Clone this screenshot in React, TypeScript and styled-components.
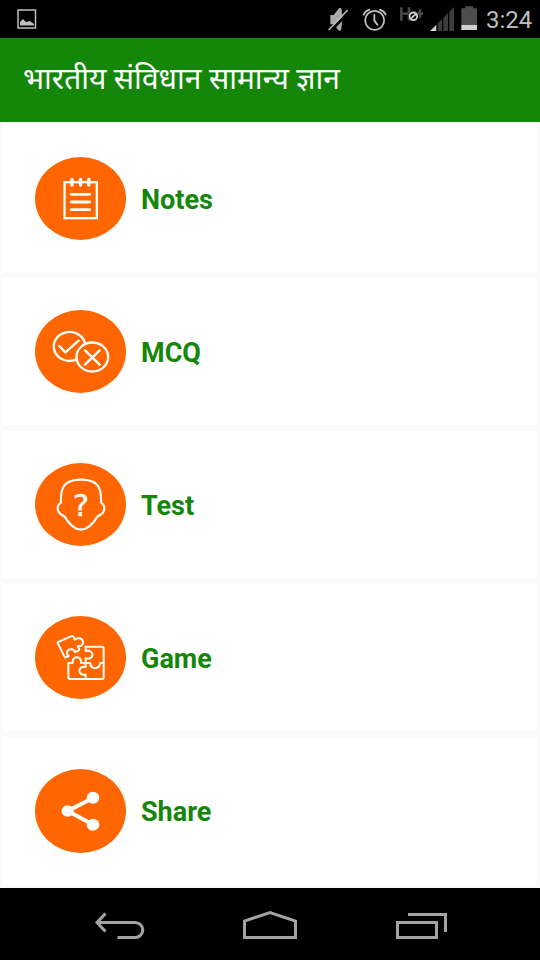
import React from 'react';
import styled, { createGlobalStyle } from 'styled-components';

const GlobalStyle = createGlobalStyle`
  * { box-sizing: border-box; }
  html, body { margin: 0; padding: 0; background: #000; }
  body { font-family: Roboto, "Noto Sans", sans-serif; overflow: hidden; }
  svg { display: block; flex: none; }
`;

const Screen = styled.div`
  width: 540px;
  height: 960px;
  display: flex;
  flex-direction: column;
  overflow: hidden;
  background: #fafafa;
`;

const StatusBar = styled.div`
  height: 38px;
  flex: none;
  display: flex;
  align-items: center;
  justify-content: space-between;
  padding: 0 8px 0 16px;
  background: #000;
`;

const StatusIcons = styled.div`
  display: flex;
  align-items: center;
`;

const Clock = styled.span`
  width: 48px;
  font-size: 24px;
  line-height: 38px;
  white-space: nowrap;
  color: #bebebe;
  padding: 2px 0 0 2px;
`;

const Header = styled.header`
  height: 84px;
  flex: none;
  display: flex;
  align-items: center;
  padding: 0 24px 2px;
  background: #14870a;
`;

const Title = styled.h1`
  margin: 0 0 0 -1px;
  font-family: Roboto, "Noto Sans Devanagari", "Noto Sans", sans-serif;
  font-size: 30px;
  font-weight: 400;
  line-height: 40px;
  white-space: nowrap;
  color: #fff;
`;

const Menu = styled.main`
  height: 766px;
  flex: none;
  display: flex;
  flex-direction: column;
  gap: 6px;
  padding: 0 3px;
`;

const Card = styled.div<{ $first?: boolean; $last?: boolean }>`
  height: ${p => (p.$first ? 150 : p.$last ? 148 : 147)}px;
  padding: ${p => (p.$first ? 35 : 32)}px 32px 0;
  display: flex;
  align-items: flex-start;
  gap: 15px;
  background: #fff;
`;

const Badge = styled.div<{ $tall?: boolean }>`
  width: 91px;
  height: ${p => (p.$tall ? 84 : 83)}px;
  flex: none;
  border-radius: 50%;
  background: #ff6600;
`;

const Label = styled.span`
  font-size: 27px;
  font-weight: 700;
  line-height: 87px;
  color: #14870a;
`;

const NavBar = styled.nav`
  height: 72px;
  flex: none;
  display: flex;
  justify-content: space-between;
  padding: 0 92px;
  background: #000;
`;

const Icon = ({ top = 30, children }: { top?: number; children: React.ReactNode }) => (
  <svg width="91" height="83" viewBox={`30 ${top} 273 249`} fill="none" stroke="#fff"
    strokeWidth="7" strokeLinecap="round" strokeLinejoin="round">
    {children}
  </svg>
);

const NotesIcon = () => (
  <Icon top={36}>
    <rect x="118.500" y="111.500" width="97" height="108" strokeLinejoin="miter" />
    <path d="M141 103V120M166.500 103V120M191.500 103V120" strokeWidth="10" />
    <path d="M139 148H194M139 171H194M139 194H194" strokeWidth="8.500" />
  </Icon>
);

const McqIcon = () => (
  <Icon>
    <path d="M155 178A47.500 43.500 0 1 1 179 126" />
    <ellipse cx="202" cy="171" rx="47.500" ry="43.500" />
    <path d="M103 138L121 157L161 122M180 151L224 194M224 151L180 194" />
  </Icon>
);

const TestIcon = () => (
  <Icon>
    <path strokeWidth="6.500" d="M168 80C139 80 119 89 112 109C107 121 109 137 107 150C98 153 96 166 100 175C103 184 114 187 119 191C132 213 148 230 168 230C188 230 204 213 217 191C222 187 233 184 236 175C240 166 238 153 229 150C227 137 229 121 224 109C217 89 197 80 168 80Z" />
    <text x="168" y="189" textAnchor="middle" fill="#fff" stroke="#fff" strokeWidth="1" fontFamily="DejaVu Sans, sans-serif" fontSize="93">?</text>
  </Icon>
);

const GameIcon = () => (
  <Icon>
    <g strokeWidth="6">
      <path d="M97 109L138 91Q143 88 146 93L149 101C157 93 173 96 174 108C175 118 167 121 158 120L162 128Q164 132 159 135L150 138C147 126 126 127 126 142Q126 147 131 150L120 155Z" />
      <path d="M182 122H231Q236 122 236 127V214Q236 219 231 219H135Q130 219 130 214V171H143C139 148 172 148 168 171H195C198 192 223 191 226 171H236" />
      <path d="M182 122V135C210 130 209 163 182 157V183C157 177 157 211 182 206V219" />
    </g>
  </Icon>
);

const ShareIcon = () => (
  <Icon>
    <path d="M205 116L128 156L205 197" strokeWidth="12" />
    <g fill="#fff" stroke="none">
      <ellipse cx="128" cy="156" rx="18.500" ry="17.500" />
      <ellipse cx="204" cy="116" rx="19" ry="18" />
      <ellipse cx="204" cy="197" rx="19" ry="18" />
    </g>
  </Icon>
);

const items = [
  { label: 'Notes', Glyph: NotesIcon },
  { label: 'MCQ', Glyph: McqIcon },
  { label: 'Test', Glyph: TestIcon },
  { label: 'Game', Glyph: GameIcon },
  { label: 'Share', Glyph: ShareIcon },
];

const PictureIcon = () => (
  <svg width="22" height="38" viewBox="0 0 22 38">
    <rect x="2" y="10" width="17.500" height="18" fill="none" stroke="#bebebe" strokeWidth="1.500" />
    <path d="M4 25.500V22L7 19L10 22L14 21L18 24V25.500Z" fill="#bebebe" />
  </svg>
);

/* Mute, alarm, mobile data, signal and battery, left to right. */
const SystemIcons = () => (
  <svg width="164" height="38" viewBox="0 0 492 114">
    <path d="M31 45H41L57 25Q64 20 65 30L66 45Q72 55 66 66L64 87Q60 97 54 89L41 73H31Z" fill="#aaa" />
    <path d="M30 96L87 35" stroke="#000" strokeWidth="8" />
    <path d="M26 90L83 30" stroke="#bebebe" strokeWidth="4.500" />
    <g fill="none" stroke="#bebebe" strokeWidth="5.500" strokeLinecap="round">
      <circle cx="164" cy="61" r="28.500" />
      <path d="M131 44Q136 33 148 29M197 44Q192 33 180 29M163 44V62L172 74" />
    </g>
    <path d="M244 22V62M267 22V62M244 41H267M279 41H309M300 28V54" fill="none" stroke="#454545" strokeWidth="8" />
    <circle cx="280" cy="49" r="15" fill="#000" />
    <circle cx="280" cy="49" r="11.500" fill="none" stroke="#cfcfcf" strokeWidth="5.500" />
    <path d="M272 56L288 42" stroke="#cfcfcf" strokeWidth="5" />
    <path d="M353 93V70L366 57V93ZM370 93V53L384 39V93ZM388 93V35L402 21V93Z" fill="#3c3c3c" />
    <path d="M330 93L349 74V93Z" fill="#cfcfcf" />
    <path d="M424 25H436V19H459V25H471V75H424Z" fill="#4d4d4d" />
    <path d="M424 75H471V90H424Z" fill="#cfcfcf" />
  </svg>
);

const BackIcon = () => (
  <svg width="56" height="72" viewBox="0 0 56 72" fill="none" stroke="#a3a3a3" strokeWidth="3">
    <path d="M5 34.500H43A7.800 7.500 0 0 1 43 49.500H25.500M13.500 25.500L5 34.500L13.500 43.500" />
  </svg>
);

const HomeIcon = () => (
  <svg width="56" height="72" viewBox="0 0 56 72" fill="none" stroke="#a3a3a3" strokeWidth="3">
    <path d="M2.500 49.500V33L28 24.500L53.500 33V49.500Z" />
  </svg>
);

const RecentIcon = () => (
  <svg width="56" height="72" viewBox="0 0 56 72" fill="none" stroke="#a3a3a3" strokeWidth="3">
    <path d="M5.500 34.500H44.500V49.500H5.500ZM16 26.500H53.500V44" />
  </svg>
);

export default function App() {
  return (
    <Screen>
      <GlobalStyle />
      <StatusBar>
        <PictureIcon />
        <StatusIcons>
          <SystemIcons />
          <Clock>3:24</Clock>
        </StatusIcons>
      </StatusBar>
      <Header>
        <Title>भारतीय संविधान सामान्य ज्ञान</Title>
      </Header>
      <Menu>
        {items.map(({ label, Glyph }, i) => (
          <Card key={label} $first={i === 0} $last={i === items.length - 1}>
            <Badge $tall={i === items.length - 1}>
              <Glyph />
            </Badge>
            <Label>{label}</Label>
          </Card>
        ))}
      </Menu>
      <NavBar>
        <BackIcon />
        <HomeIcon />
        <RecentIcon />
      </NavBar>
    </Screen>
  );
}
